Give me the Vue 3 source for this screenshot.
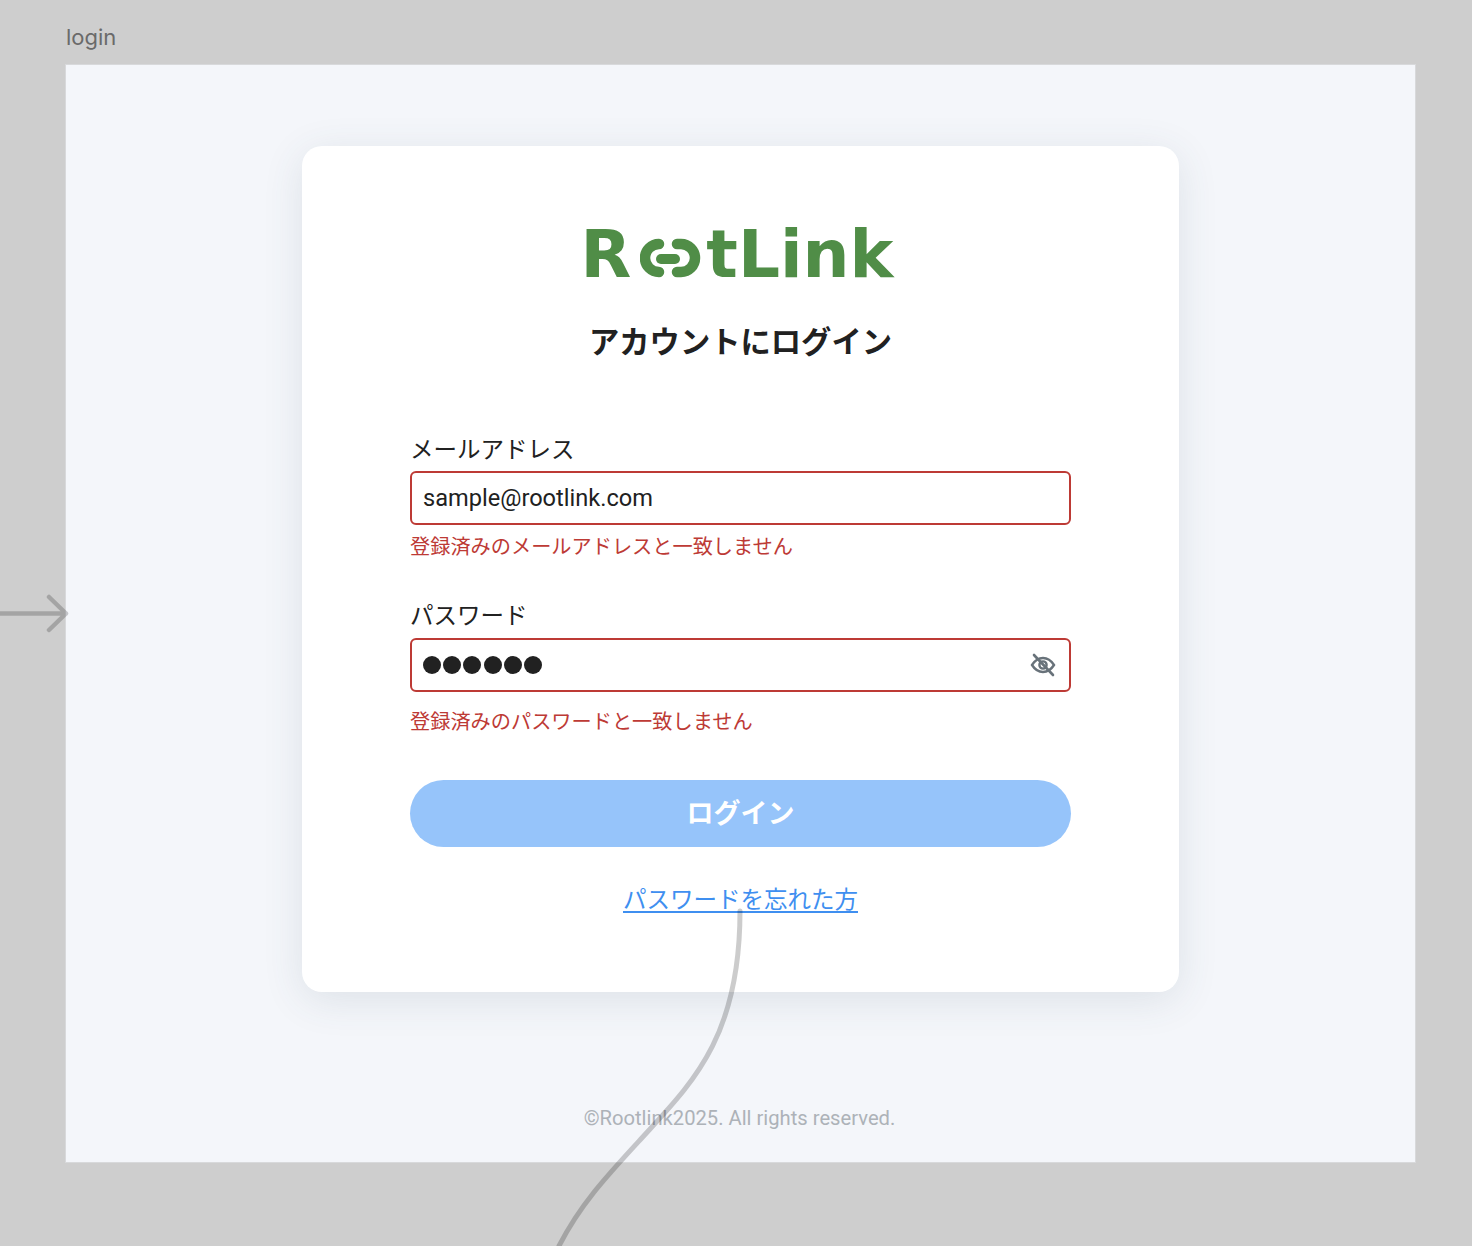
<template>
  <div class="canvas">
    <div class="frame-name">login</div>
    <div class="frame">
      <div class="card">
        <div class="logo">
          <span>R</span>
          <svg class="logo-link" width="64" height="40" viewBox="0 0 64 40" fill="none" stroke="#508d47" stroke-width="10.5" stroke-linecap="round">
            <path d="M19 6 A14 14 0 0 0 19 34" />
            <path d="M37 6 H41 A14 14 0 0 1 41 34 H37" />
            <rect x="16" y="16" width="24" height="10" rx="5" fill="#508d47" stroke="none" />
          </svg>
          <span>tLink</span>
        </div>
        <h1 class="title">アカウントにログイン</h1>

        <div class="field first">
          <label>メールアドレス</label>
          <div class="input">sample@rootlink.com</div>
          <p class="error">登録済みのメールアドレスと一致しません</p>
        </div>

        <div class="field second">
          <label>パスワード</label>
          <div class="input">
            <div class="dots">
              <i v-for="n in 6" :key="n"></i>
            </div>
            <svg class="eye" width="26" height="26" viewBox="0 0 26 26" fill="none" stroke="#68727a" stroke-width="2.4">
              <path d="M2 13 C5.5 7.5 9.5 6 13 6 C16.5 6 20.5 7.5 24 13 C20.5 18.5 16.5 20 13 20 C9.5 20 5.5 18.5 2 13 Z" />
              <circle cx="13" cy="13" r="3.6" />
              <path d="M4 3 L23 23" stroke-width="2.6" stroke-linecap="round" />
            </svg>
          </div>
          <p class="error spaced">登録済みのパスワードと一致しません</p>
        </div>

        <button class="submit">ログイン</button>
        <a class="forgot">パスワードを忘れた方</a>
      </div>
      <div class="copyright">©Rootlink2025. All rights reserved.</div>
    </div>

    <!-- prototype connectors on top of the frame -->
    <svg class="wires" width="1472" height="1246" viewBox="0 0 1472 1246" fill="none">
      <path d="M0 613.5 H66 M49 597 L66 613.5 L49 630" stroke="#000" stroke-opacity="0.2" stroke-width="4.5" stroke-linecap="round" stroke-linejoin="round" />
      <path d="M740 911 C740 1040 690 1085 640 1140 C605 1178 580 1205 559 1246" stroke="#000" stroke-opacity="0.2" stroke-width="5" stroke-linecap="round" />
    </svg>
  </div>
</template>

<script setup>
</script>

<style>
body {
  margin: 0;
  background: #cecece;
}
</style>

<style scoped>
.canvas {
  position: relative;
  width: 1472px;
  height: 1246px;
  overflow: hidden;
  padding: 22px 0 0 66px;
  box-sizing: border-box;
  background: #cecece;
  font-family: Roboto, "Noto Sans CJK JP", sans-serif;
}

.frame-name {
  height: 43px;
  font-family: Inter, sans-serif;
  font-size: 22px;
  line-height: 30px;
  color: #6a6a6a;
}

.frame {
  width: 1349px;
  height: 1097px;
  background: #f4f6fa;
  box-shadow: 0 0 0 1px #d8d9db;
  padding-top: 81px;
  box-sizing: border-box;
  display: flex;
  flex-direction: column;
  align-items: center;
}

.card {
  width: 877px;
  height: 846px;
  box-sizing: border-box;
  padding: 72px 108px 0;
  background: #fff;
  border-radius: 20px;
  box-shadow: 0 8px 40px rgba(60, 80, 100, 0.12);
  display: flex;
  flex-direction: column;
}

.logo {
  display: flex;
  justify-content: center;
  align-items: center;
  height: 70px;
  padding-right: 7px;
  font-family: "DejaVu Sans", sans-serif;
  font-weight: 700;
  font-size: 66px;
  line-height: 70px;
  color: #508d47;
}

.logo span {
  margin-top: 4px;
}

.logo-link {
  margin: 10px 2px 0 9px;
}

.title {
  margin: 31px 0 0;
  height: 48px;
  font-size: 30.3px;
  line-height: 48px;
  font-weight: 700;
  text-align: center;
  color: #212121;
}

.field {
  display: flex;
  flex-direction: column;
}

.first {
  margin-top: 66px;
}

.second {
  margin-top: 37px;
}

label {
  font-size: 23.5px;
  line-height: 34px;
  color: #212121;
  margin-bottom: 4px;
}

.second label {
  margin-bottom: 5px;
}

.input {
  height: 54px;
  box-sizing: border-box;
  border: 2px solid #bd3a35;
  border-radius: 6px;
  padding: 0 13px 0 11px;
  display: flex;
  align-items: center;
  justify-content: space-between;
  font-size: 23.6px;
  color: #212121;
}

.dots {
  display: flex;
  gap: 2.2px;
}

.dots i {
  width: 18px;
  height: 18px;
  border-radius: 50%;
  background: #212121;
}

.error {
  margin: 7px 0 0;
  font-size: 20.2px;
  line-height: 30px;
  color: #bd3a35;
}

.spaced {
  margin-top: 15px;
}

.submit {
  margin-top: 43px;
  height: 67px;
  padding: 0 0 4px;
  border: 0;
  border-radius: 34px;
  background: #96c4fa;
  color: #fff;
  font-family: inherit;
  font-size: 27px;
  font-weight: 700;
}

.forgot {
  align-self: center;
  margin-top: 35px;
  font-size: 23.5px;
  line-height: 36px;
  color: #3f8ff0;
  text-decoration: underline;
  text-underline-offset: 3px;
}

.copyright {
  margin-top: 111px;
  margin-right: 2px;
  font-size: 20.2px;
  line-height: 30px;
  color: #adb2b8;
}

.wires {
  position: absolute;
  left: 0;
  top: 0;
  pointer-events: none;
}
</style>
